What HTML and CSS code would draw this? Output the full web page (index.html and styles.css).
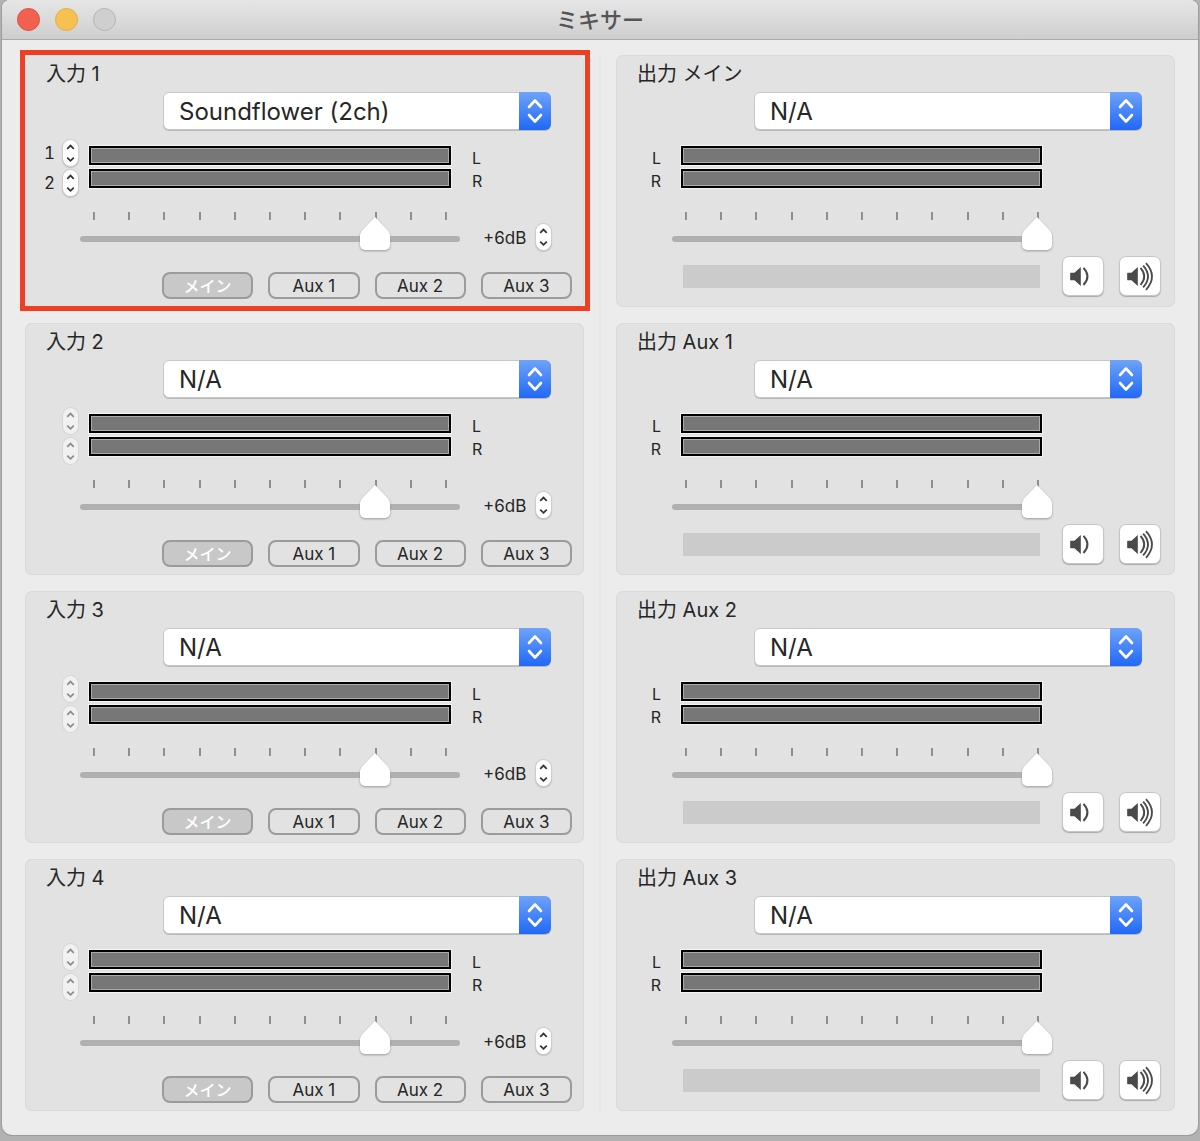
FILE: index.html
```html
<!DOCTYPE html>
<html lang="ja">
<head>
  <meta charset="UTF-8">
  <meta name="viewport" content="width=device-width, initial-scale=1">
  <title>ミキサー</title>
  <link rel="stylesheet" href="styles.css">
</head>
<body>

  <!-- Iconos -->
  <svg class="icons" aria-hidden="true">
    <symbol id="chevrons" viewBox="0 0 32 38">
      <path d="M10 15 L16 8.500 L22 15 M10 23 L16 29.500 L22 23" fill="none" stroke="#fff" stroke-width="2.600" stroke-linecap="round" stroke-linejoin="round"/>
    </symbol>
    <symbol id="up" viewBox="0 0 16 13">
      <path d="M4.500 9 L8 5.500 L11.500 9" fill="none" stroke="currentColor" stroke-width="1.800"/>
    </symbol>
    <symbol id="down" viewBox="0 0 16 13">
      <path d="M4.500 4.500 L8 8 L11.500 4.500" fill="none" stroke="currentColor" stroke-width="1.800"/>
    </symbol>
    <symbol id="low" viewBox="0 0 42 40">
      <path d="M7.500 17 Q7.500 16.500 8 16.500 H12 L18.700 10.500 V30.500 L12 24.500 H8 Q7.500 24.500 7.500 24 Z" fill="#4a4a4a"/>
      <path d="M21.500 11.500 Q30 20.500 21.500 29.500" fill="none" stroke="#4a4a4a" stroke-width="2"/>
    </symbol>
    <symbol id="high" viewBox="0 0 42 40">
      <path d="M7.500 17 Q7.500 16.500 8 16.500 H12 L18.700 10.500 V30.500 L12 24.500 H8 Q7.500 24.500 7.500 24 Z" fill="#4a4a4a"/>
      <path d="M21.500 11.500 Q29.500 20.500 21.500 29.500 M24.300 9 Q34.500 20.500 24.300 32 M27.300 6.500 Q40 20.500 27.300 34.500" fill="none" stroke="#4a4a4a" stroke-width="1.900"/>
    </symbol>
  </svg>

  <div class="window">
    <header class="titlebar">
      <div class="lights">
        <button class="light close" aria-label="閉じる"></button>
        <button class="light minimize" aria-label="しまう"></button>
        <button class="light zoom" aria-label="拡大" disabled></button>
      </div>
      <h1>ミキサー</h1>
    </header>

    <main class="mixer">
      <!-- Entradas -->
      <div class="column inputs">

        <section class="panel selected">
          <label class="name" for="in1">入力 1</label>
          <div class="device">
            <select id="in1"><option>Soundflower (2ch)</option></select>
            <span class="arrows"><svg><use href="#chevrons"/></svg></span>
          </div>
          <div class="levels">
            <div class="channels">
              <div class="channel">
                <span>1</span>
                <div class="stepper">
                  <button aria-label="増やす"><svg><use href="#up"/></svg></button>
                  <button aria-label="減らす"><svg><use href="#down"/></svg></button>
                </div>
              </div>
              <div class="channel">
                <span>2</span>
                <div class="stepper">
                  <button aria-label="増やす"><svg><use href="#up"/></svg></button>
                  <button aria-label="減らす"><svg><use href="#down"/></svg></button>
                </div>
              </div>
            </div>
            <div class="meters"><div class="meter"></div><div class="meter"></div></div>
            <div class="sides"><span>L</span><span>R</span></div>
          </div>
          <div class="volume">
            <div class="slider">
              <div class="ticks"><i></i><i></i><i></i><i></i><i></i><i></i><i></i><i></i><i></i><i></i><i></i></div>
              <input type="range" min="0" max="10" value="8" aria-label="入力 1 音量">
            </div>
            <span class="gain">+6dB</span>
            <div class="stepper">
              <button aria-label="増やす"><svg><use href="#up"/></svg></button>
              <button aria-label="減らす"><svg><use href="#down"/></svg></button>
            </div>
          </div>
          <div class="routes">
            <button class="on">メイン</button>
            <button>Aux 1</button>
            <button>Aux 2</button>
            <button>Aux 3</button>
          </div>
        </section>

        <section class="panel">
          <label class="name" for="in2">入力 2</label>
          <div class="device">
            <select id="in2"><option>N/A</option></select>
            <span class="arrows"><svg><use href="#chevrons"/></svg></span>
          </div>
          <div class="levels">
            <div class="channels">
              <div class="channel">
                <div class="stepper">
                  <button aria-label="増やす" disabled><svg><use href="#up"/></svg></button>
                  <button aria-label="減らす" disabled><svg><use href="#down"/></svg></button>
                </div>
              </div>
              <div class="channel">
                <div class="stepper">
                  <button aria-label="増やす" disabled><svg><use href="#up"/></svg></button>
                  <button aria-label="減らす" disabled><svg><use href="#down"/></svg></button>
                </div>
              </div>
            </div>
            <div class="meters"><div class="meter"></div><div class="meter"></div></div>
            <div class="sides"><span>L</span><span>R</span></div>
          </div>
          <div class="volume">
            <div class="slider">
              <div class="ticks"><i></i><i></i><i></i><i></i><i></i><i></i><i></i><i></i><i></i><i></i><i></i></div>
              <input type="range" min="0" max="10" value="8" aria-label="入力 2 音量">
            </div>
            <span class="gain">+6dB</span>
            <div class="stepper">
              <button aria-label="増やす"><svg><use href="#up"/></svg></button>
              <button aria-label="減らす"><svg><use href="#down"/></svg></button>
            </div>
          </div>
          <div class="routes">
            <button class="on">メイン</button>
            <button>Aux 1</button>
            <button>Aux 2</button>
            <button>Aux 3</button>
          </div>
        </section>

        <section class="panel">
          <label class="name" for="in3">入力 3</label>
          <div class="device">
            <select id="in3"><option>N/A</option></select>
            <span class="arrows"><svg><use href="#chevrons"/></svg></span>
          </div>
          <div class="levels">
            <div class="channels">
              <div class="channel">
                <div class="stepper">
                  <button aria-label="増やす" disabled><svg><use href="#up"/></svg></button>
                  <button aria-label="減らす" disabled><svg><use href="#down"/></svg></button>
                </div>
              </div>
              <div class="channel">
                <div class="stepper">
                  <button aria-label="増やす" disabled><svg><use href="#up"/></svg></button>
                  <button aria-label="減らす" disabled><svg><use href="#down"/></svg></button>
                </div>
              </div>
            </div>
            <div class="meters"><div class="meter"></div><div class="meter"></div></div>
            <div class="sides"><span>L</span><span>R</span></div>
          </div>
          <div class="volume">
            <div class="slider">
              <div class="ticks"><i></i><i></i><i></i><i></i><i></i><i></i><i></i><i></i><i></i><i></i><i></i></div>
              <input type="range" min="0" max="10" value="8" aria-label="入力 3 音量">
            </div>
            <span class="gain">+6dB</span>
            <div class="stepper">
              <button aria-label="増やす"><svg><use href="#up"/></svg></button>
              <button aria-label="減らす"><svg><use href="#down"/></svg></button>
            </div>
          </div>
          <div class="routes">
            <button class="on">メイン</button>
            <button>Aux 1</button>
            <button>Aux 2</button>
            <button>Aux 3</button>
          </div>
        </section>

        <section class="panel">
          <label class="name" for="in4">入力 4</label>
          <div class="device">
            <select id="in4"><option>N/A</option></select>
            <span class="arrows"><svg><use href="#chevrons"/></svg></span>
          </div>
          <div class="levels">
            <div class="channels">
              <div class="channel">
                <div class="stepper">
                  <button aria-label="増やす" disabled><svg><use href="#up"/></svg></button>
                  <button aria-label="減らす" disabled><svg><use href="#down"/></svg></button>
                </div>
              </div>
              <div class="channel">
                <div class="stepper">
                  <button aria-label="増やす" disabled><svg><use href="#up"/></svg></button>
                  <button aria-label="減らす" disabled><svg><use href="#down"/></svg></button>
                </div>
              </div>
            </div>
            <div class="meters"><div class="meter"></div><div class="meter"></div></div>
            <div class="sides"><span>L</span><span>R</span></div>
          </div>
          <div class="volume">
            <div class="slider">
              <div class="ticks"><i></i><i></i><i></i><i></i><i></i><i></i><i></i><i></i><i></i><i></i><i></i></div>
              <input type="range" min="0" max="10" value="8" aria-label="入力 4 音量">
            </div>
            <span class="gain">+6dB</span>
            <div class="stepper">
              <button aria-label="増やす"><svg><use href="#up"/></svg></button>
              <button aria-label="減らす"><svg><use href="#down"/></svg></button>
            </div>
          </div>
          <div class="routes">
            <button class="on">メイン</button>
            <button>Aux 1</button>
            <button>Aux 2</button>
            <button>Aux 3</button>
          </div>
        </section>
      </div>

      <div class="divider"></div>

      <!-- Salidas -->
      <div class="column outputs">

        <section class="panel">
          <label class="name" for="out1">出力 メイン</label>
          <div class="device">
            <select id="out1"><option>N/A</option></select>
            <span class="arrows"><svg><use href="#chevrons"/></svg></span>
          </div>
          <div class="levels">
            <div class="sides"><span>L</span><span>R</span></div>
            <div class="meters"><div class="meter"></div><div class="meter"></div></div>
          </div>
          <div class="volume">
            <div class="slider">
              <div class="ticks"><i></i><i></i><i></i><i></i><i></i><i></i><i></i><i></i><i></i><i></i><i></i></div>
              <input type="range" min="0" max="10" value="10" aria-label="出力 メイン 音量">
            </div>
          </div>
          <div class="monitor">
            <div class="bar"></div>
            <button aria-label="音量を下げる"><svg><use href="#low"/></svg></button>
            <button aria-label="音量を上げる"><svg><use href="#high"/></svg></button>
          </div>
        </section>

        <section class="panel">
          <label class="name" for="out2">出力 Aux 1</label>
          <div class="device">
            <select id="out2"><option>N/A</option></select>
            <span class="arrows"><svg><use href="#chevrons"/></svg></span>
          </div>
          <div class="levels">
            <div class="sides"><span>L</span><span>R</span></div>
            <div class="meters"><div class="meter"></div><div class="meter"></div></div>
          </div>
          <div class="volume">
            <div class="slider">
              <div class="ticks"><i></i><i></i><i></i><i></i><i></i><i></i><i></i><i></i><i></i><i></i><i></i></div>
              <input type="range" min="0" max="10" value="10" aria-label="出力 Aux 1 音量">
            </div>
          </div>
          <div class="monitor">
            <div class="bar"></div>
            <button aria-label="音量を下げる"><svg><use href="#low"/></svg></button>
            <button aria-label="音量を上げる"><svg><use href="#high"/></svg></button>
          </div>
        </section>

        <section class="panel">
          <label class="name" for="out3">出力 Aux 2</label>
          <div class="device">
            <select id="out3"><option>N/A</option></select>
            <span class="arrows"><svg><use href="#chevrons"/></svg></span>
          </div>
          <div class="levels">
            <div class="sides"><span>L</span><span>R</span></div>
            <div class="meters"><div class="meter"></div><div class="meter"></div></div>
          </div>
          <div class="volume">
            <div class="slider">
              <div class="ticks"><i></i><i></i><i></i><i></i><i></i><i></i><i></i><i></i><i></i><i></i><i></i></div>
              <input type="range" min="0" max="10" value="10" aria-label="出力 Aux 2 音量">
            </div>
          </div>
          <div class="monitor">
            <div class="bar"></div>
            <button aria-label="音量を下げる"><svg><use href="#low"/></svg></button>
            <button aria-label="音量を上げる"><svg><use href="#high"/></svg></button>
          </div>
        </section>

        <section class="panel">
          <label class="name" for="out4">出力 Aux 3</label>
          <div class="device">
            <select id="out4"><option>N/A</option></select>
            <span class="arrows"><svg><use href="#chevrons"/></svg></span>
          </div>
          <div class="levels">
            <div class="sides"><span>L</span><span>R</span></div>
            <div class="meters"><div class="meter"></div><div class="meter"></div></div>
          </div>
          <div class="volume">
            <div class="slider">
              <div class="ticks"><i></i><i></i><i></i><i></i><i></i><i></i><i></i><i></i><i></i><i></i><i></i></div>
              <input type="range" min="0" max="10" value="10" aria-label="出力 Aux 3 音量">
            </div>
          </div>
          <div class="monitor">
            <div class="bar"></div>
            <button aria-label="音量を下げる"><svg><use href="#low"/></svg></button>
            <button aria-label="音量を上げる"><svg><use href="#high"/></svg></button>
          </div>
        </section>
      </div>
    </main>
  </div>

</body>
</html>
```
FILE: styles.css
```css
* {
  box-sizing: border-box;
}
body {
  margin: 0;
  padding: 0 2px 6px;
  font-family: Inter, "Noto Sans CJK JP", sans-serif;
  font-size: 17px;
  color: #262626;
  background: #b2b2b2;
}
button, select, input {
  margin: 0;
  padding: 0;
  font-family: inherit;
  color: inherit;
}
svg {
  display: block;
  width: 100%;
  height: 100%;
}
.icons {
  display: none;
}

.window {
  background: #ececec;
  border-radius: 8px 8px 10px 10px;
  box-shadow: 0 0 0 1px #9c9c9c;
}
.titlebar {
  display: grid;
  grid-template-columns: 1fr auto 1fr;
  align-items: center;
  height: 40px;
  padding: 0 15px;
  background: linear-gradient(#e6e6e6, #cecece);
  border-bottom: 1px solid #ababab;
  border-radius: 8px 8px 0 0;
}
.titlebar h1 {
  margin: 0;
  font-size: 22px;
  line-height: 38px;
  font-weight: 500;
  color: #555;
}
.lights {
  display: flex;
  gap: 15px;
}
.light {
  width: 23px;
  height: 23px;
  border: 1px solid #b4b4b4;
  border-radius: 50%;
  background: #cfcfcf;
}
.close {
  background: #f2604f;
  border-color: #e2503f;
}
.minimize {
  background: #f6c151;
  border-color: #e2ae45;
}

.mixer {
  display: flex;
  gap: 15px;
  padding: 15px 23px 24px;
}
.column {
  flex: 1;
  display: flex;
  flex-direction: column;
  gap: 16px;
}
.divider {
  width: 2px;
  background: #e7e7e7;
}
.panel {
  position: relative;
  padding-top: 4px;
  background: #e2e2e2;
  border-radius: 7px;
  box-shadow: inset 0 0 0 1px #dadada;
}
.inputs .panel {
  padding-bottom: 8px;
}
.outputs .panel {
  padding-bottom: 11px;
}
.selected::after {
  content: "";
  position: absolute;
  inset: -5px -6px -4px -5px;
  border: 5px solid #ee3e23;
  pointer-events: none;
}
.name {
  display: block;
  margin-left: 21px;
  font-size: 20px;
  line-height: 30px;
}

/* dispositivo */
.device {
  position: relative;
  height: 38px;
  margin: 3px 33px 0 138px;
}
.device select {
  width: 100%;
  height: 100%;
  padding: 1px 40px 0 15px;
  font-size: 24px;
  background: #fff;
  border: 1px solid #c8c8c8;
  border-radius: 6px;
  box-shadow: 0 1px 0 #b8b8b8;
  appearance: none;
}
.arrows {
  position: absolute;
  top: 0;
  right: 0;
  width: 32px;
  height: 38px;
  background: linear-gradient(#6ea3f8, #2168f6);
  border-radius: 0 6px 6px 0;
  pointer-events: none;
}

/* niveles */
.levels {
  display: flex;
  height: 56px;
  margin-top: 10px;
}
.channels {
  display: flex;
  flex-direction: column;
  gap: 4px;
  width: 64px;
  padding-right: 11px;
}
.channel {
  display: flex;
  justify-content: flex-end;
  align-items: center;
  gap: 8px;
  font-variant-numeric: tabular-nums;
}
.stepper {
  width: 15px;
  height: 26px;
  background: #fff;
  border-radius: 8px;
  box-shadow: 0 0 0 1px #cdcdcd, 0 1px 1px 1px #bdbdbd;
}
.stepper button {
  display: block;
  width: 100%;
  height: 13px;
  border: 0;
  background: none;
  color: #333;
}
.stepper:has(:disabled) {
  background: #f1f1f1;
  box-shadow: 0 0 0 1px #d6d6d6;
}
.stepper button:disabled {
  color: #8c8c8c;
}
.meters {
  flex: 1;
  display: flex;
  flex-direction: column;
  gap: 4px;
  padding-top: 6px;
}
.meter {
  height: 19px;
  background: #777;
  border: 2px solid #000;
  box-shadow: 0 0 0 1px #f4f4f4, inset 0 0 0 1px #aaa;
}
.sides {
  display: flex;
  flex-direction: column;
  padding-top: 7px;
  font-size: 16px;
  line-height: 23px;
}
.inputs .sides {
  width: 133px;
  padding-left: 21px;
}
.outputs .sides {
  width: 65px;
  padding-right: 20px;
  text-align: right;
}
.outputs .meters {
  margin-right: 133px;
}

/* volumen */
.volume {
  display: flex;
  align-items: center;
  height: 40px;
  margin: 15px 33px 0 55px;
}
.slider {
  position: relative;
  flex: 1;
  height: 40px;
  padding-top: 1px;
}
.slider::before {
  content: "";
  position: absolute;
  left: 0;
  right: 0;
  top: 25px;
  height: 6px;
  border-radius: 3px;
  background: #b0b0b0;
}
.ticks {
  display: flex;
  justify-content: space-between;
  padding: 0 13px;
}
.ticks i {
  width: 2px;
  height: 8px;
  background: #8e8e8e;
}
.slider input {
  position: absolute;
  left: 0;
  top: 6px;
  width: 100%;
  height: 33px;
  background: none;
  appearance: none;
  filter: drop-shadow(0 1px 1px #999);
}
.slider input::-webkit-slider-thumb {
  appearance: none;
  width: 30px;
  height: 33px;
  background: #fff;
  border-radius: 5px;
  clip-path: polygon(50% 0, 94% 42%, 100% 54%, 100% 100%, 0 100%, 0 54%, 6% 42%);
}
.gain {
  width: 76px;
  padding-left: 23px;
  margin-top: 13px;
}
.volume .stepper {
  margin-top: 11px;
}
.outputs .volume {
  margin: 15px 123px 0 56px;
}

/* destinos */
.routes {
  display: flex;
  gap: 15px;
  margin: 21px 12px 0 137px;
}
.routes button {
  flex: 1;
  height: 27px;
  padding-top: 2px;
  font-size: 17px;
  line-height: 21px;
  background: none;
  border: 2px solid #9b9b9b;
  border-radius: 8px;
}
.routes .on {
  background: #c8c8c8;
  color: #fff;
  font-size: 16px;
  font-weight: 500;
}

.monitor {
  display: flex;
  align-items: center;
  gap: 15px;
  margin: 5px 14px 0 67px;
}
.bar {
  flex: 1;
  height: 23px;
  margin-right: 7px;
  background: #cbcbcb;
}
.monitor button {
  width: 42px;
  height: 40px;
  background: #fff;
  border: 1px solid #c6c6c6;
  border-radius: 7px;
  box-shadow: 0 1px 1px #aaa;
}
```
